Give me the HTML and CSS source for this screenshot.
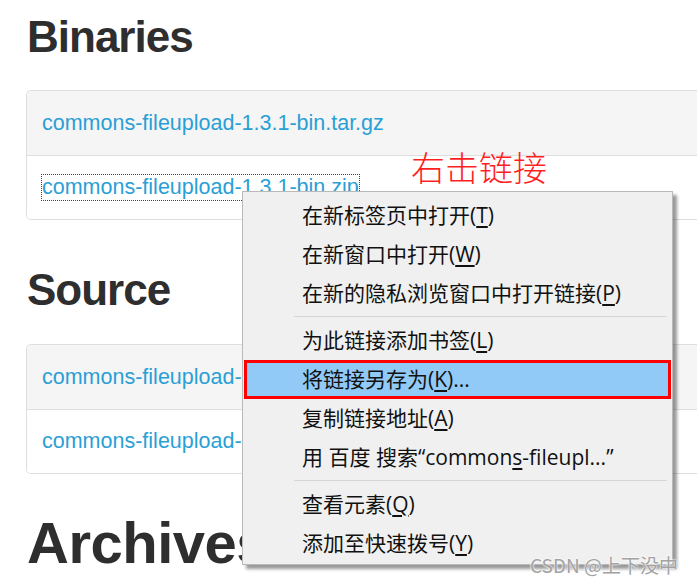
FILE: index.html
```html
<!DOCTYPE html>
<html lang="zh-CN">
<head>
<meta charset="UTF-8" />
<meta name="viewport" content="width=device-width, initial-scale=1" />
<title>Download Commons FileUpload</title>
<link rel="stylesheet" href="styles.css">
</head>
<body>

<div class="page">
  <h2 class="section-title">Binaries</h2>
  <div class="file-list">
    <div class="file-row"><a href="#">commons-fileupload-1.3.1-bin.tar.gz</a></div>
    <div class="file-row"><a href="#" class="focused">commons-fileupload-1.3.1-bin.zip</a></div>
  </div>

  <h2 class="section-title">Source</h2>
  <div class="file-list">
    <div class="file-row"><a href="#">commons-fileupload-1.3.1-src.tar.gz</a></div>
    <div class="file-row"><a href="#">commons-fileupload-1.3.1-src.zip</a></div>
  </div>

  <h2 class="section-title big">Archives</h2>
</div>

<!-- annotation -->
<div class="note">右击链接</div>

<!-- context menu -->
<div class="context-menu">
  <div class="menu-item">在新标签页中打开(<u>T</u>)</div>
  <div class="menu-item">在新窗口中打开(<u>W</u>)</div>
  <div class="menu-item">在新的隐私浏览窗口中打开链接(<u>P</u>)</div>
  <div class="menu-sep"></div>
  <div class="menu-item">为此链接添加书签(<u>L</u>)</div>
  <div class="menu-item active">将链接另存为(<u>K</u>)...</div>
  <div class="menu-item">复制链接地址(<u>A</u>)</div>
  <div class="menu-item">用 百度 搜索“common<u>s</u>-fileupl...”</div>
  <div class="menu-sep"></div>
  <div class="menu-item">查看元素(<u>Q</u>)</div>
  <div class="menu-item">添加至快速拨号(<u>Y</u>)</div>
</div>

<div class="watermark">CSDN @上下没中</div>

</body>
</html>
```

FILE: styles.css
```css
/* Base */
body {
  margin: 0;
  font-family: 'Liberation Sans', Arial, sans-serif;
  background: #fff;
  color: #333;
  overflow: hidden;
  width: 697px;
  height: 584px;
  position: relative;
}

/* Layout */
.page {
  padding: 1px 0 0 26px;
}

.section-title {
  font-size: 44px;
  line-height: 48px;
  font-weight: bold;
  letter-spacing: -1px;
  color: #2e2e2e;
  margin: 46px 0 30px 1px;
}
.section-title:first-child {
  margin-top: 12px;
  margin-bottom: 29px;
}
.section-title.big {
  font-size: 58px;
  line-height: 62px;
  letter-spacing: -0.5px;
  margin-top: 38px;
}

/* File panels (cut off by the right edge of the window) */
.file-list {
  border: 1px solid #dedede;
  border-right: none;
  border-radius: 5px 0 0 5px;
  overflow: hidden;
}
.file-row {
  height: 64px;
  display: flex;
  align-items: center;
  padding-left: 15px;
  background: #fff;
}
.file-row:first-child {
  background: #f5f5f5;
}
.file-row + .file-row {
  border-top: 1px solid #dedede;
  height: 63px;
}
.file-row a {
  font-size: 21.5px;
  color: #2a9fd6;
  text-decoration: none;
  white-space: nowrap;
}
.file-row a.focused {
  outline: 1px dotted #444;
}

/* Annotation */
.note {
  position: absolute;
  left: 411px;
  top: 147px;
  font-family: 'Noto Sans CJK SC', sans-serif;
  font-weight: 300;
  font-size: 34px;
  line-height: 40px;
  color: #ff1f1f;
}

/* Context menu */
.context-menu {
  position: absolute;
  left: 242px;
  top: 191px;
  width: 429px;
  padding: 4px 0 1px;
  background: #f0f0f0;
  border: 1px solid #b9b9b9;
  box-shadow: 4px 4px 3px rgba(0, 0, 0, 0.4);
  font-family: 'Open Sans', 'Noto Sans CJK SC', sans-serif;
  font-size: 21px;
  color: #111;
}
.menu-item {
  height: 39px;
  line-height: 39px;
  padding-left: 59px;
  white-space: nowrap;
}
.menu-item u {
  text-underline-offset: 3px;
}
.menu-item.active {
  margin: 0 1px;
  padding-left: 58px;
  background: #91c9f7;
  outline: 3px solid #f00;
  outline-offset: -3px;
}
.menu-sep {
  height: 1px;
  margin: 3px 5px 4px 51px;
  background: #d5d5d5;
}

/* Watermark */
.watermark {
  position: absolute;
  left: 530px;
  top: 553px;
  font-family: 'Noto Sans CJK SC', sans-serif;
  font-size: 19px;
  line-height: 24px;
  color: #a2a2a2;
  text-shadow: 0 0 2px #fff, 0 0 2px #fff;
}
```
